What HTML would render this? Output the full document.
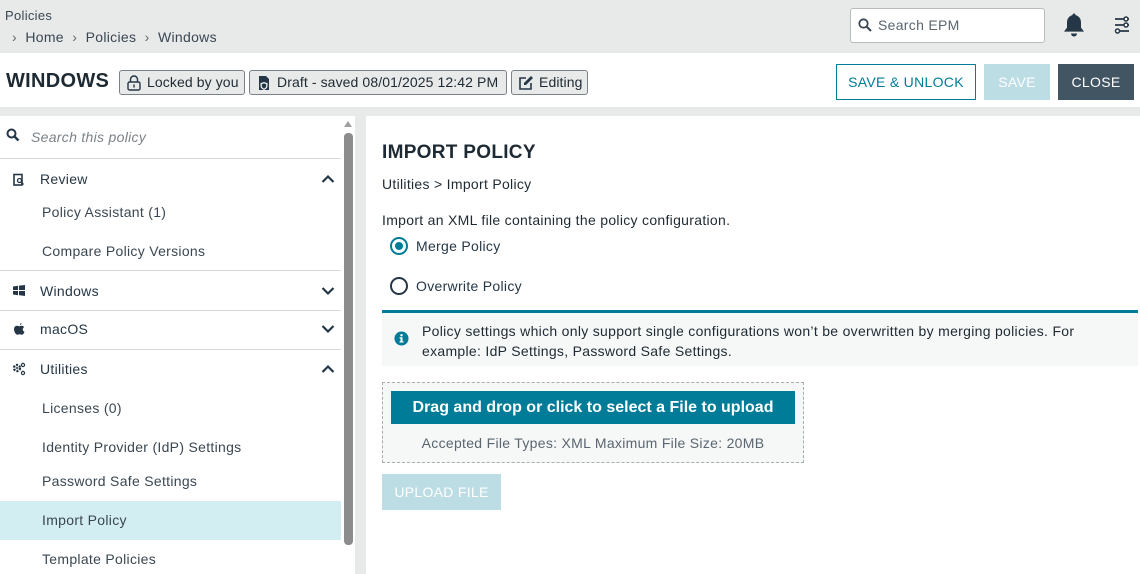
<!DOCTYPE html>
<html><head><meta charset="utf-8"><style>
*{box-sizing:border-box;margin:0;padding:0}
body{width:1140px;height:574px;overflow:hidden;background:#e8e9e9;font-family:"Liberation Sans",sans-serif;color:#253746;font-size:14px;position:relative;letter-spacing:0.3px}
.a{position:absolute;white-space:nowrap}
.badge{position:absolute;top:70px;height:25px;border:1px solid #7a8288;border-radius:3px;background:#e8e9e9;font-size:14px;line-height:23px;padding:0 4px 0 27px;color:#1e2a33;letter-spacing:0.1px;white-space:nowrap;overflow:hidden}
.badge svg{position:absolute;left:6px;top:4px}
.side{position:absolute;left:0;top:116px;width:341px;height:458px;background:#fff}
.line{position:absolute;left:0;width:341px;height:1px;background:#d5d7d8}
.it{position:absolute;left:42px;font-size:14px;color:#3a4752;white-space:nowrap}
.hd{position:absolute;left:40px;font-size:14px;color:#253746}
.chev{position:absolute;left:321px}
</style></head><body>
<div class="a" style="left:5px;top:8px;font-size:13px;color:#3a4752">Policies</div>
<div class="a" style="left:12px;top:29px;font-size:14px;color:#3a4752"><span style="color:#666">›</span>&nbsp; Home &nbsp;<span style="color:#666">›</span>&nbsp; Policies &nbsp;<span style="color:#666">›</span>&nbsp; Windows</div>
<div class="a" style="left:850px;top:8px;width:195px;height:35px;background:#fff;border:1px solid #b8bcbf;border-radius:3px"></div>
<svg class="a" style="left:858px;top:18px" width="14" height="14" viewBox="0 0 14 14"><circle cx="5.5" cy="5.5" r="4.2" fill="none" stroke="#3a4752" stroke-width="1.8"/><path d="M8.5 8.5L13 13" stroke="#3a4752" stroke-width="2"/></svg>
<div class="a" style="left:878px;top:17px;font-size:14px;color:#5a6670">Search EPM</div>
<svg class="a" style="left:1062px;top:12px" width="24" height="26" viewBox="0 0 24 26"><path d="M12 1.5c1 0 1.5.7 1.5 1.6 3.5.8 5.5 3.6 5.5 7.5v5l3 4H2l3-4v-5c0-3.9 2-6.7 5.5-7.5 0-.9.5-1.6 1.5-1.6z" fill="#253746"/><path d="M9 21.5a3 3 0 0 0 6 0z" fill="#253746"/></svg>
<svg class="a" style="left:1114px;top:16px" width="16" height="18" viewBox="0 0 16 18"><g stroke="#253746" stroke-width="1.8" fill="none"><path d="M1 3h14M1 9h14M1 15h14"/></g><circle cx="12" cy="3" r="2" fill="#fff" stroke="#253746" stroke-width="1.5"/><circle cx="12" cy="9" r="2" fill="#fff" stroke="#253746" stroke-width="1.5"/><circle cx="3.5" cy="15" r="2" fill="#fff" stroke="#253746" stroke-width="1.5"/></svg>

<div class="a" style="left:0;top:53px;width:1140px;height:54px;background:#fff"></div>
<div class="a" style="left:6px;top:70px;font-size:20px;font-weight:bold;color:#1e2a33">WINDOWS</div>
<div class="badge" style="left:119px;width:126px"><svg width="16" height="16" viewBox="0 0 16 16"><rect x="2" y="7" width="12" height="8" rx="1.5" fill="none" stroke="#253746" stroke-width="1.4"/><path d="M4.5 7V4.5a3.5 3.5 0 0 1 7 0V7" fill="none" stroke="#253746" stroke-width="1.4"/><rect x="7.3" y="9.5" width="1.4" height="3" fill="#253746"/></svg>Locked by you</div>
<div class="badge" style="left:249px;width:258px"><svg width="16" height="16" viewBox="0 0 16 16"><path d="M3 1h7l3 3v11H3z" fill="#253746"/><path d="M8 7l3.5 1.3v2.5C11.5 13 10 14 8 15 6 14 4.5 13 4.5 10.8V8.3z" fill="#fff"/><path d="M8 8.3l2.3.8v1.8c0 1.4-1 2.1-2.3 2.8-1.3-.7-2.3-1.4-2.3-2.8V9.1z" fill="#253746"/></svg>Draft - saved 08/01/2025 12:42 PM</div>
<div class="badge" style="left:511px;width:77px"><svg width="16" height="16" viewBox="0 0 16 16"><path d="M8 3H2v11h11V8" fill="none" stroke="#253746" stroke-width="1.6"/><path d="M13 1l2 2-7 7H6V8z" fill="#253746"/></svg>Editing</div>
<div class="a" style="left:836px;top:64px;width:140px;height:36px;border:1px solid #007c98;color:#007c98;font-size:14px;text-align:center;line-height:34px">SAVE &amp; UNLOCK</div>
<div class="a" style="left:984px;top:64px;width:66px;height:36px;background:#bcdde4;color:#fff;font-size:14px;text-align:center;line-height:36px">SAVE</div>
<div class="a" style="left:1058px;top:64px;width:76px;height:36px;background:#425563;color:#fff;font-size:14px;text-align:center;line-height:36px">CLOSE</div>

<div class="side">
<svg class="a" style="left:6px;top:12px" width="14" height="14" viewBox="0 0 14 14"><circle cx="5.5" cy="5.5" r="4" fill="none" stroke="#253746" stroke-width="2"/><path d="M8.5 8.5L12.5 12.5" stroke="#253746" stroke-width="2.4"/></svg>
<div class="a" style="left:31px;top:13px;font-style:italic;color:#7a8288;font-size:14px">Search this policy</div>
<div class="line" style="top:42px"></div>
<svg class="a" style="left:13px;top:57px" width="12" height="13" viewBox="0 0 12 13"><rect x="1" y="1.5" width="8" height="10.5" fill="none" stroke="#253746" stroke-width="1.6"/><circle cx="6.5" cy="7.5" r="2" fill="none" stroke="#253746" stroke-width="1.3"/><path d="M8 9l2.5 2.5" stroke="#253746" stroke-width="1.4"/></svg>
<div class="hd" style="top:55px">Review</div>
<svg class="chev" style="top:58px" width="14" height="10" viewBox="0 0 14 10"><path d="M1.5 8L7 2.5 12.5 8" fill="none" stroke="#253746" stroke-width="2.2"/></svg>
<div class="it" style="top:88px">Policy Assistant (1)</div>
<div class="it" style="top:127px">Compare Policy Versions</div>
<div class="line" style="top:154px"></div>
<svg class="a" style="left:13px;top:169px" width="12" height="11" viewBox="0 0 12 11"><path d="M0 1.5l5-.8V5H0zM6 .6L12 0v5H6zM0 6h5v4.3L0 9.5zM6 6h6v5l-6-.9z" fill="#253746"/></svg>
<div class="hd" style="top:167px">Windows</div>
<svg class="chev" style="top:170px" width="14" height="10" viewBox="0 0 14 10"><path d="M1.5 2L7 7.5 12.5 2" fill="none" stroke="#253746" stroke-width="2.2"/></svg>
<div class="line" style="top:194px"></div>
<svg class="a" style="left:14px;top:207px" width="11" height="12" viewBox="0 0 11 12"><path d="M7.5 0c.1 1-.6 2-1.6 2.2C5.8 1.2 6.6.2 7.5 0zM5.5 3.3c.7 0 1.4-.5 2.2-.5 1.2 0 2 .7 2.4 1.3-2 1.1-1.7 4 .4 4.6-.4 1.2-1.4 3.1-2.6 3.1-.9 0-1.1-.5-2.2-.5S4.3 11.8 3.4 11.8C2 11.8 0 9 0 6.3 0 4 1.5 2.8 3 2.8c.9 0 1.7.5 2.5.5z" fill="#253746"/></svg>
<div class="hd" style="top:205px">macOS</div>
<svg class="chev" style="top:208px" width="14" height="10" viewBox="0 0 14 10"><path d="M1.5 2L7 7.5 12.5 2" fill="none" stroke="#253746" stroke-width="2.2"/></svg>
<div class="line" style="top:233px"></div>
<svg class="a" style="left:12px;top:246px" width="14" height="14" viewBox="0 0 14 14"><circle cx="5" cy="6" r="3" fill="none" stroke="#253746" stroke-width="2.4" stroke-dasharray="2 1.2"/><circle cx="5" cy="6" r="1" fill="#253746"/><circle cx="11" cy="3" r="1.6" fill="none" stroke="#253746" stroke-width="1.2"/><circle cx="11" cy="11" r="1.6" fill="none" stroke="#253746" stroke-width="1.2"/></svg>
<div class="hd" style="top:245px">Utilities</div>
<svg class="chev" style="top:248px" width="14" height="10" viewBox="0 0 14 10"><path d="M1.5 8L7 2.5 12.5 8" fill="none" stroke="#253746" stroke-width="2.2"/></svg>
<div class="it" style="top:284px">Licenses (0)</div>
<div class="it" style="top:323px">Identity Provider (IdP) Settings</div>
<div class="it" style="top:357px">Password Safe Settings</div>
<div class="a" style="left:0;top:385px;width:341px;height:39px;background:#d3eef3"></div>
<div class="it" style="top:396px">Import Policy</div>
<div class="it" style="top:435px">Template Policies</div>
</div>
<div class="a" style="left:341px;top:116px;width:14px;height:458px;background:#fff"></div>
<svg class="a" style="left:343px;top:120px" width="10" height="8" viewBox="0 0 10 8"><path d="M5 1L9 7H1z" fill="#a0a0a0"/></svg>
<div class="a" style="left:344px;top:133px;width:9px;height:412px;background:#8c8c8c;border-radius:4px"></div>

<div class="a" style="left:366px;top:116px;width:774px;height:458px;background:#fff"></div>
<div class="a" style="left:382px;top:142px;font-size:19px;font-weight:bold;color:#1e2a33">IMPORT POLICY</div>
<div class="a" style="left:382px;top:176px;font-size:14px;color:#1e2a33">Utilities &gt; Import Policy</div>
<div class="a" style="left:382px;top:212px;font-size:14px;color:#1e2a33">Import an XML file containing the policy configuration.</div>
<div class="a" style="left:390px;top:237px;width:18px;height:18px;border:2px solid #007c98;border-radius:50%"><div style="position:absolute;left:3px;top:3px;width:8px;height:8px;border-radius:50%;background:#007c98"></div></div>
<div class="a" style="left:416px;top:238px;font-size:14px;color:#253746">Merge Policy</div>
<div class="a" style="left:390px;top:277px;width:18px;height:18px;border:2px solid #253746;border-radius:50%"></div>
<div class="a" style="left:416px;top:278px;font-size:14px;color:#253746">Overwrite Policy</div>
<div class="a" style="left:382px;top:310px;width:756px;height:56px;background:#f6f7f7;border-top:3px solid #007c98"></div>
<svg class="a" style="left:394px;top:331px" width="15" height="15" viewBox="0 0 15 15"><circle cx="7.5" cy="7.5" r="7" fill="#007c98"/><rect x="6.5" y="6.3" width="2" height="5" fill="#fff"/><rect x="5.5" y="10.3" width="4" height="1.2" fill="#fff"/><rect x="5.5" y="6.3" width="2" height="1.1" fill="#fff"/><circle cx="7.5" cy="4.2" r="1.2" fill="#fff"/></svg>
<div class="a" style="left:422px;top:321px;font-size:14px;line-height:20px;color:#1e2a33">Policy settings which only support single configurations won’t be overwritten by merging policies. For<br>example: IdP Settings, Password Safe Settings.</div>
<div class="a" style="left:382px;top:382px;width:422px;height:81px;background:#f6f7f7;border:1px dashed #a8adb0"></div>
<div class="a" style="left:391px;top:391px;width:404px;height:33px;background:#007c98;color:#fff;font-weight:bold;font-size:16px;text-align:center;line-height:33px;letter-spacing:0">Drag and drop or click to select a File to upload</div>
<div class="a" style="left:382px;top:435px;width:422px;text-align:center;font-size:14px;color:#5a6670">Accepted File Types: XML Maximum File Size: 20MB</div>
<div class="a" style="left:382px;top:474px;width:119px;height:36px;background:#bcdde4;color:#fff;font-size:14px;text-align:center;line-height:36px">UPLOAD FILE</div>
</body></html>
